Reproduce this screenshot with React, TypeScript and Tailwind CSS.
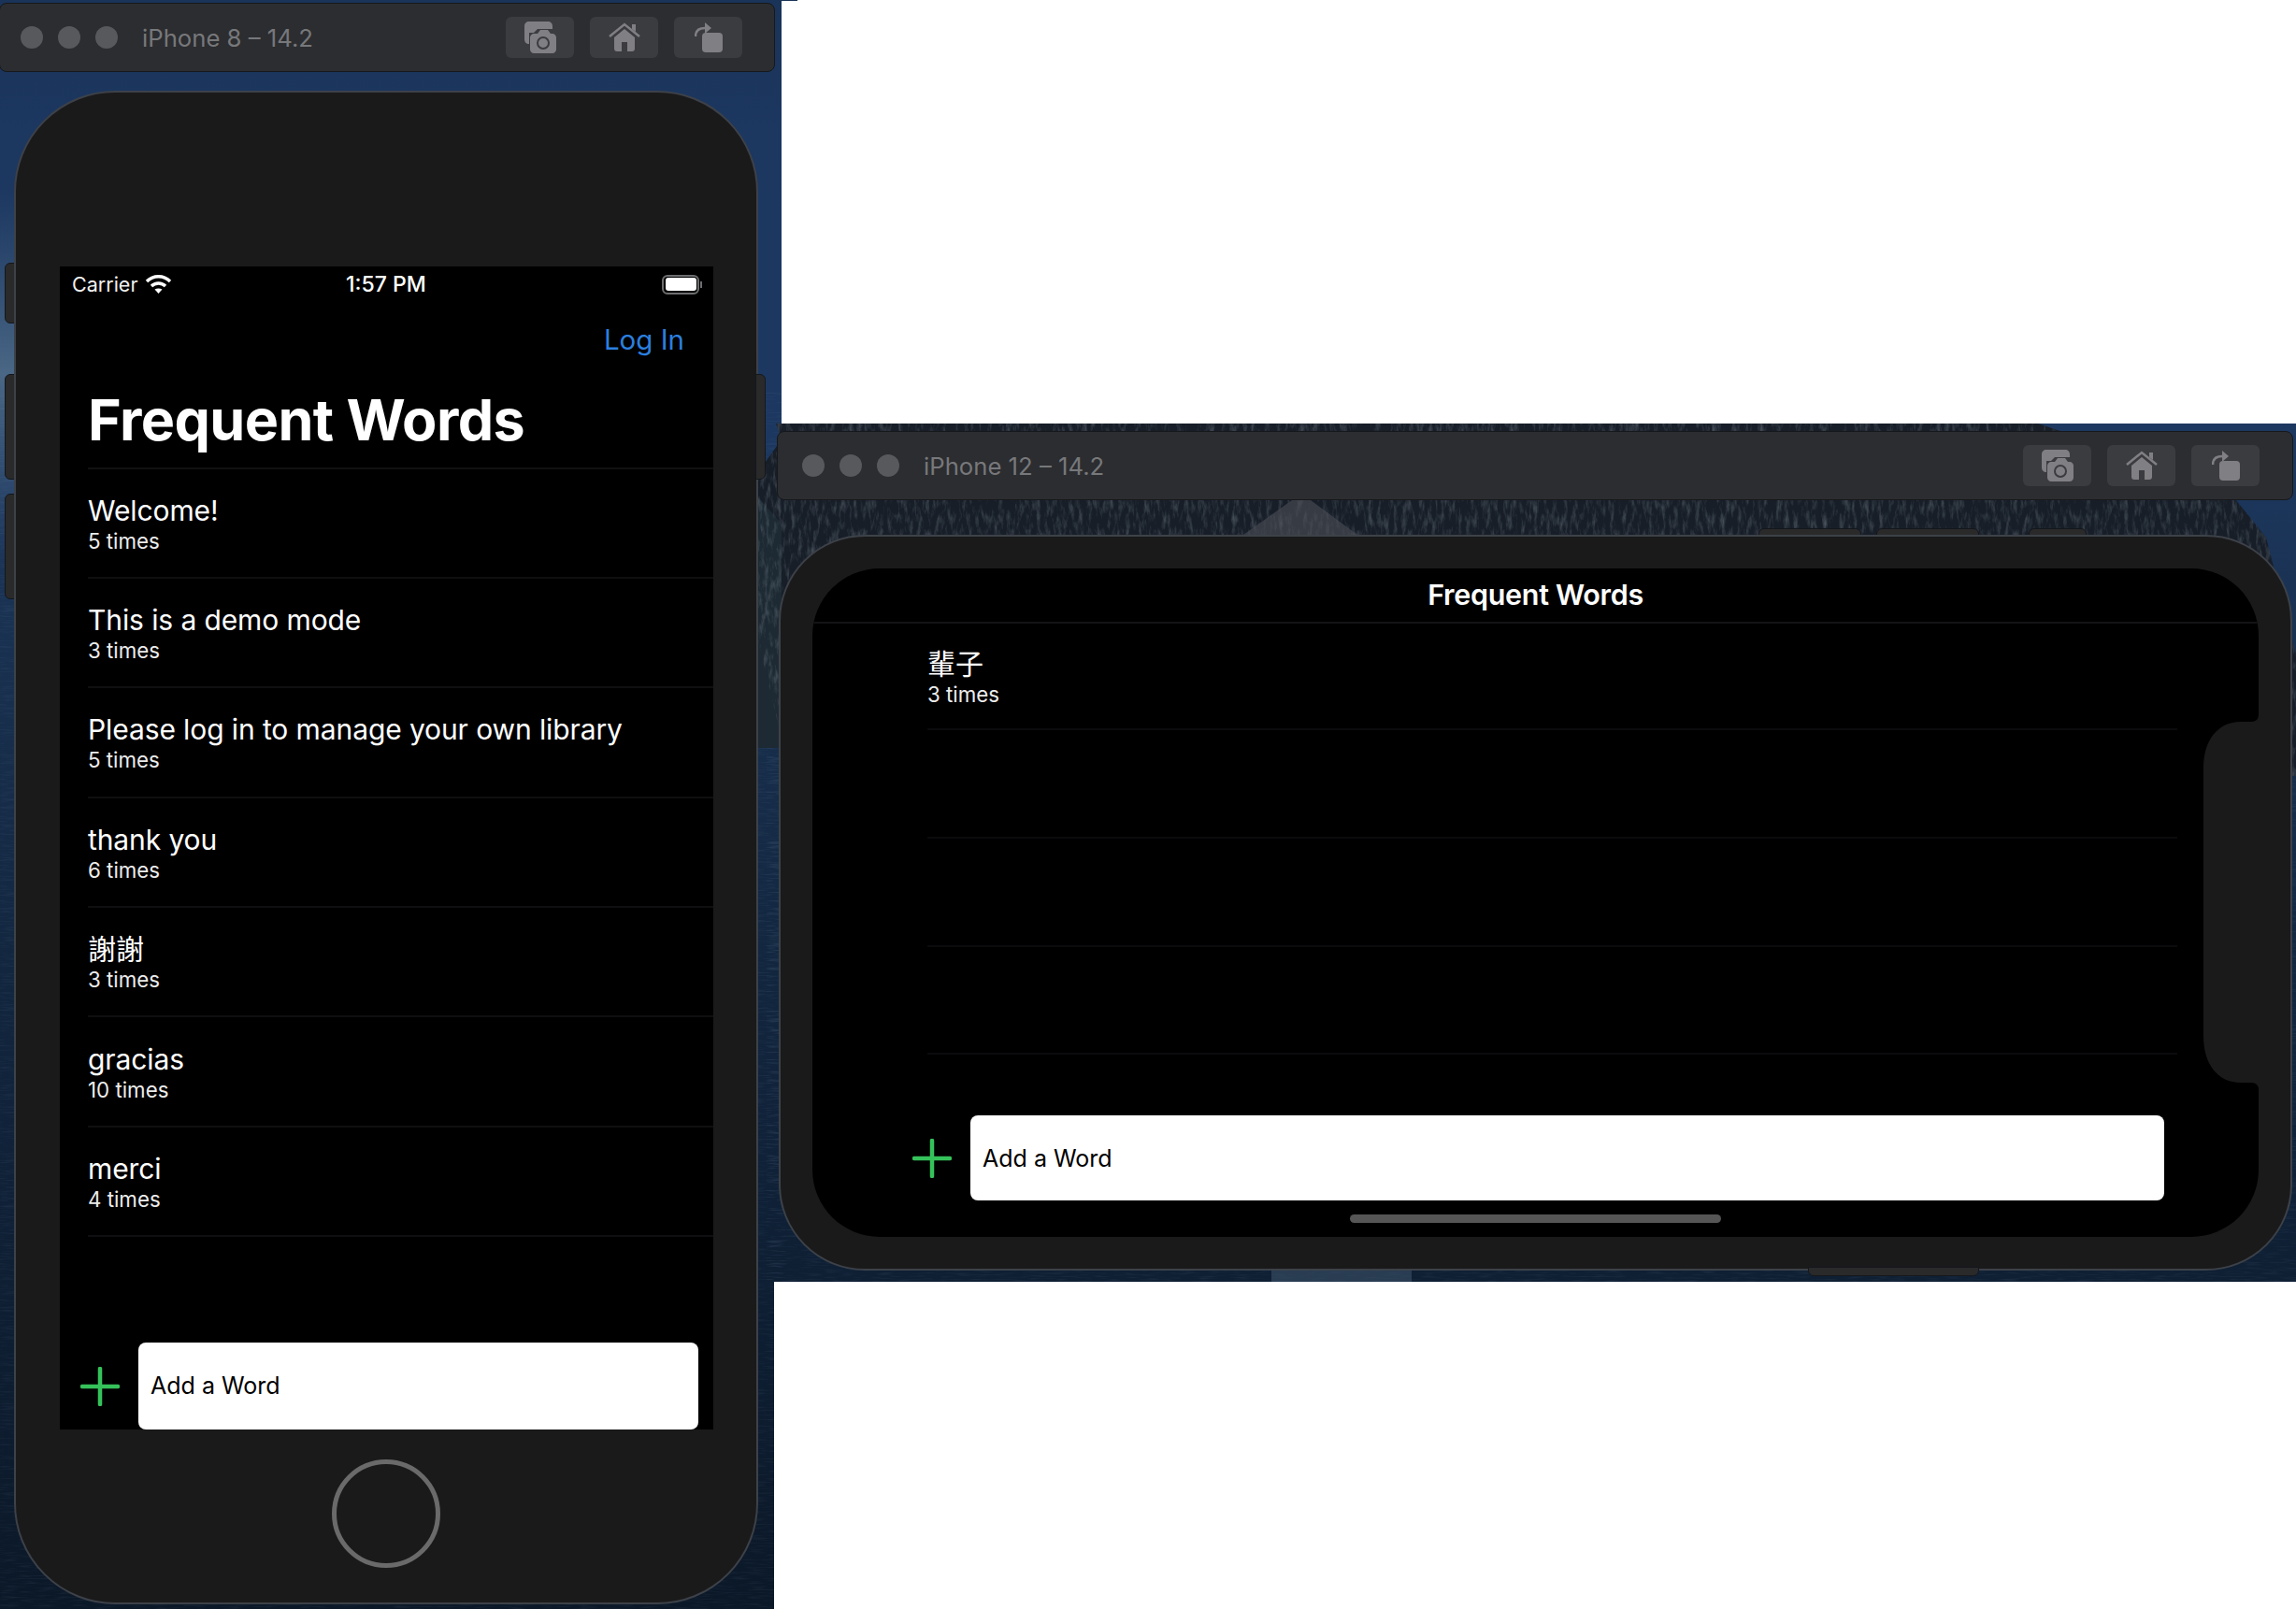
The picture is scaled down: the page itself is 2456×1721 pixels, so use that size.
import React from 'react';

const SANS = "font-['Inter','Noto_Sans_CJK_TC',sans-serif]";

const WORDS = [
  { word: 'Welcome!', count: '5 times' },
  { word: 'This is a demo mode', count: '3 times' },
  { word: 'Please log in to manage your own library', count: '5 times' },
  { word: 'thank you', count: '6 times' },
  { word: '謝謝', count: '3 times' },
  { word: 'gracias', count: '10 times' },
  { word: 'merci', count: '4 times' },
];

const ROCK = 'M830 453H2180C2260 480 2340 505 2392 535L2424 575L2456 700V830H2300L1700 800L836 790L800 640L811 505L836 470Z';

const Wallpaper = () => (
  <svg className="absolute inset-0" width="2456" height="1721" viewBox="0 0 2456 1721">
    <defs>
      <linearGradient id="sea" x1="0" y1="0" x2="0" y2="1">
        <stop offset="0" stopColor="#1a3358" />
        <stop offset="0.08" stopColor="#1c3760" />
        <stop offset="0.27" stopColor="#1d3860" />
        <stop offset="0.4" stopColor="#193150" />
        <stop offset="0.6" stopColor="#12263f" />
        <stop offset="1" stopColor="#0b1828" />
      </linearGradient>
      <linearGradient id="mist" x1="0" y1="0" x2="0" y2="1">
        <stop offset="0" stopColor="#3f5d80" stopOpacity="0" />
        <stop offset="0.5" stopColor="#4a6785" />
        <stop offset="1" stopColor="#3f5d80" stopOpacity="0" />
      </linearGradient>
      <clipPath id="desk">
        <path d="M0 0H836V453H2456V1371H828V1721H0Z" />
      </clipPath>
      <clipPath id="rock">
        <path d={ROCK} />
      </clipPath>
      <filter id="streaks" x="0" y="0" width="100%" height="100%">
        <feTurbulence type="fractalNoise" baseFrequency="0.22 0.06" numOctaves="4" seed="7" />
        <feColorMatrix values="0 0 0 0 0.5  0 0 0 0 0.58  0 0 0 0 0.66  2 0 0 0 -0.92" />
      </filter>
      <filter id="ripple" x="0" y="0" width="100%" height="100%">
        <feTurbulence type="fractalNoise" baseFrequency="0.05 0.6" numOctaves="2" seed="3" />
        <feColorMatrix values="0 0 0 0 0.45  0 0 0 0 0.6  0 0 0 0 0.8  1.6 0 0 0 -0.75" />
      </filter>
    </defs>
    <g clipPath="url(#desk)">
      <rect width="2456" height="1721" fill="url(#sea)" />
      <rect x="0" y="200" width="20" height="400" fill="url(#mist)" />
      <rect x="0" y="420" width="840" height="1301" fill="#000" filter="url(#ripple)" opacity="0.1" />
      <rect x="820" y="800" width="1636" height="571" fill="#000" filter="url(#ripple)" opacity="0.1" />
      <path d={ROCK} fill="#171e28" />
      <path d="M800 520L836 560V800H800Z" fill="#1d2a33" />
      <rect x="760" y="453" width="1696" height="400" fill="#000" filter="url(#streaks)" clipPath="url(#rock)" opacity="0.3" />
      <path d="M1330 572L1382 535H1402L1452 572Z" fill="#4c4f57" opacity="0.6" />
      <rect x="1360" y="1359" width="150" height="12" fill="#3a5068" opacity="0.6" />
    </g>
    <rect x="836" y="0" width="17" height="1" fill="#1a3358" />
  </svg>
);

const CameraIcon = () => (
  <svg width="34" height="34" viewBox="0 0 34 34">
    <path d="M5 0H25C28 0 30 2 30 5V8H14L10 12H5V24C2 24 0 22 0 19V5C0 2 2 0 5 0Z" fill="#807f83" />
    <path d="M10 13H14L17 9H25L28 13H30C32 13 34 15 34 17V30C34 32 32 34 30 34H10C8 34 6 32 6 30V17C6 15 8 13 10 13Z" fill="#807f83" />
    <circle cx="20" cy="23" r="6" fill="none" stroke="#3b3c3f" strokeWidth="2" />
  </svg>
);

const HomeIcon = () => (
  <svg width="34" height="32" viewBox="0 0 34 32">
    <path d="M1 15L17 2L33 15" fill="none" stroke="#807f83" strokeWidth="2.5" />
    <path d="M25 2H29V10L25 7Z" fill="#807f83" />
    <path d="M6 16L17 7L28 16V28C28 30 27 31 25 31H9C7 31 6 30 6 28Z" fill="#807f83" />
    <rect x="14" y="21" width="6" height="10" fill="#3b3c3f" />
  </svg>
);

const RotateIcon = () => (
  <svg width="30" height="32" viewBox="0 0 30 32">
    <rect x="8" y="11" width="22" height="21" rx="4" fill="#807f83" />
    <path d="M1 15C1 9 5 6 11 6" fill="none" stroke="#807f83" strokeWidth="2.5" />
    <path d="M11 0L18 6L11 12Z" fill="#807f83" />
  </svg>
);

const TitleBar = ({ title, className, dotsClass, buttonsClass }: { title: string; className: string; dotsClass: string; buttonsClass: string }) => (
  <div className={`absolute h-[74px] flex items-center bg-[#2c2d30] rounded-lg border border-[#17181b] ${className}`}>
    <div className={`flex gap-4 ${dotsClass}`}>
      <span className="w-6 h-6 rounded-full bg-[#58595c]" />
      <span className="w-6 h-6 rounded-full bg-[#58595c]" />
      <span className="w-6 h-6 rounded-full bg-[#58595c]" />
    </div>
    <span className={`ml-[26px] pt-[2px] text-[25.7px] text-[#77787b] ${SANS}`}>{title}</span>
    <div className={`ml-auto flex gap-[17px] ${buttonsClass}`}>
      <button className="w-[73px] h-11 rounded-md bg-[#3b3c3f] flex items-center justify-center"><CameraIcon /></button>
      <button className="w-[73px] h-11 rounded-md bg-[#3b3c3f] flex items-center justify-center"><HomeIcon /></button>
      <button className="w-[73px] h-11 rounded-md bg-[#3b3c3f] flex items-center justify-center"><RotateIcon /></button>
    </div>
  </div>
);

const Row = ({ word, count, className = 'h-[117.4px] border-[#0f0f11]' }: { word: string; count: string; className?: string }) => (
  <div className={`flex flex-col justify-center border-b-2 text-white ${className}`}>
    <div className="text-[30px] leading-[38px] tracking-[-0.1px]">{word}</div>
    <div className="text-[22.3px] leading-[26px] mt-px text-[#ececec]">{count}</div>
  </div>
);

const Plus = () => (
  <svg width="42" height="42" viewBox="0 0 42 42" className="shrink-0">
    <path d="M21 2V40M2 21H40" stroke="#35c25a" strokeWidth="4.5" strokeLinecap="round" />
  </svg>
);

const AddWord = ({ inputClass }: { inputClass: string }) => (
  <div className={`bg-white rounded-lg flex items-center pl-[13px] text-[25px] text-black ${inputClass}`}>Add a Word</div>
);

const Iphone8 = () => (
  <div className="absolute left-[15px] top-[97px] w-[796px] h-[1619px]">
    <span className="absolute left-[-10px] top-[184px] w-[13px] h-[65px] rounded-l-md bg-[#2a2a2b] border border-[#14171c]" />
    <span className="absolute left-[-10px] top-[303px] w-[13px] h-[113px] rounded-l-md bg-[#2a2a2b] border border-[#14171c]" />
    <span className="absolute left-[-10px] top-[431px] w-[13px] h-[113px] rounded-l-md bg-[#2a2a2b] border border-[#14171c]" />
    <div className="relative h-full rounded-[108px] bg-[#1a1a1b] border-2 border-[#3d4148] flex flex-col items-center">
      <div className={`mt-[186px] ml-px w-[699px] h-[1244px] bg-black flex flex-col ${SANS}`}>
        <div className="h-[38px] flex items-center justify-between pl-[13px] pr-[12px] text-white text-[21.5px] relative">
          <div className="flex items-center gap-[8px]">
            <span className="text-[#f0f0f0]">Carrier</span>
            <svg width="29" height="22" viewBox="0 0 29 22" fill="none" stroke="#fff" strokeWidth="3.4">
              <path d="M2 8C9 1 20 1 27 8" />
              <path d="M7 13C11 9 18 9 22 13" />
              <path d="M14.5 21L10.5 16.5C13 15 16 15 18.5 16.5Z" fill="#fff" stroke="none" />
            </svg>
          </div>
          <span className="absolute left-[306px] text-[23px] font-medium">1:57 PM</span>
          <div className="flex items-center">
            <div className="w-[40px] h-[21px] rounded-md border-2 border-[#6d6e70] p-[1.5px]">
              <div className="w-full h-full rounded-[3px] bg-white" />
            </div>
            <span className="w-[2px] h-[7px] bg-[#6d6e70] ml-[1px]" />
          </div>
        </div>
        <div className="h-[76px] flex items-center justify-end pr-[31px] pt-[5px] text-[29.5px] text-[#2b7fdf]">Log In</div>
        <div className="ml-[30px] flex flex-col">
          <div className="h-[102.5px] flex items-center text-[61px] font-bold text-white tracking-[-0.6px] border-b-2 border-[#111113]">
            Frequent Words
          </div>
          {WORDS.map((w) => (
            <Row key={w.word} word={w.word} count={w.count} />
          ))}
        </div>
        <div className="mt-auto flex items-center pl-[22px] pr-4">
          <Plus />
          <AddWord inputClass="ml-[20px] w-[600px] h-[93px]" />
        </div>
      </div>
      <div className="mt-[32px] w-[116px] h-[116px] rounded-full border-[5px] border-[#6a6a6b]" />
    </div>
    <span className="absolute right-[-8px] top-[303px] w-[11px] h-[113px] rounded-r-md bg-[#2a2a2b] border border-[#14171c]" />
  </div>
);

const Iphone12 = () => (
  <div className="absolute left-[833px] top-[572px] w-[1619px] h-[787px]">
    <span className="absolute left-[1048px] top-[-7px] w-[110px] h-[12px] rounded-t-md bg-[#2a2a2b] border border-[#14171c]" />
    <span className="absolute left-[1174px] top-[-7px] w-[110px] h-[12px] rounded-t-md bg-[#2a2a2b] border border-[#14171c]" />
    <span className="absolute left-[1337px] top-[-7px] w-[62px] h-[12px] rounded-t-md bg-[#2a2a2b] border border-[#14171c]" />
    <div className="relative h-full rounded-[92px] bg-[#1a1a1b] border-2 border-[#3d4148] p-[34px]">
      <div className={`relative h-full w-[1547px] rounded-[72px] bg-black overflow-hidden flex flex-col ${SANS}`}>
        <div className="h-[59px] shrink-0 flex items-center justify-center pb-[2px] text-[30.5px] font-semibold text-white tracking-[-0.3px] border-b-2 border-[#141416]">
          Frequent Words
        </div>
        <div className="ml-[123px] mr-[87px]">
          <Row word="輩子" count="3 times" className="h-[114px] pt-[1px] border-[#0b0b0e]" />
          <div className="h-[116px] border-b-2 border-[#0b0b0e]" />
          <div className="h-[116px] border-b-2 border-[#0b0b0e]" />
          <div className="h-[115px] border-b-2 border-[#0b0b0e]" />
        </div>
        <div className="flex items-center ml-[107px] mt-[65px]">
          <Plus />
          <AddWord inputClass="ml-[20px] w-[1277px] h-[91px] pt-[2px]" />
        </div>
        <div className="mt-[15px] self-center w-[397px] h-[9px] rounded-full bg-[#565657]" />
        <svg className="absolute right-0 top-[156px]" width="59" height="402" viewBox="0 -8 59 402">
          <path d="M59 -8Q59 0 51 0H40C15 0 0 20 0 50V336C0 366 15 386 40 386H51Q59 386 59 394Z" fill="#1a1a1b" />
        </svg>
      </div>
    </div>
    <span className="absolute left-[1101px] bottom-[-6px] w-[183px] h-[10px] rounded-b-md bg-[#2a2a2b] border border-[#14171c]" />
  </div>
);

export default function App() {
  return (
    <div className="relative w-[2456px] h-[1721px] bg-white overflow-hidden">
      <Wallpaper />
      <TitleBar title="iPhone 8 – 14.2" className="-left-px top-[3px] w-[830px]" dotsClass="ml-[22px]" buttonsClass="mr-[34px]" />
      <Iphone8 />
      <TitleBar title="iPhone 12 – 14.2" className="left-[831px] top-[461px] w-[1622px]" dotsClass="ml-[26px]" buttonsClass="mr-[35px]" />
      <Iphone12 />
    </div>
  );
}
